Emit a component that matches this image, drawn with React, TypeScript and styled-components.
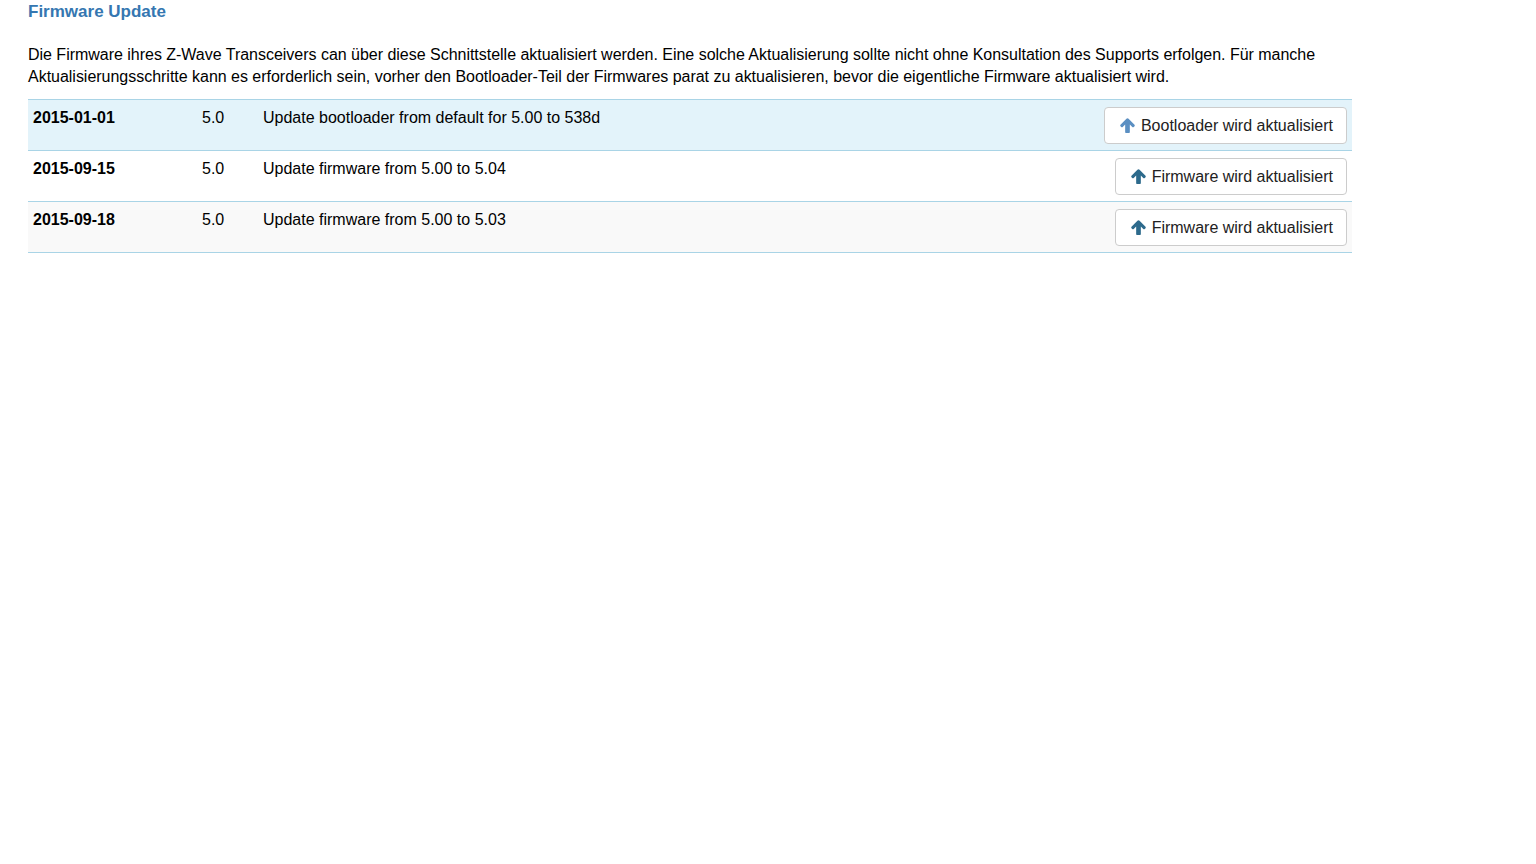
import { createGlobalStyle, styled } from "styled-components";

const GlobalStyle = createGlobalStyle`
  html, body {
    margin: 0;
    padding: 0;
    background: #fff;
  }
  body {
    font-family: "Liberation Sans", Arial, sans-serif;
    color: #000;
  }
`;

const updates = [
  {
    id: 1,
    date: "2015-01-01",
    version: "5.0",
    text: "Update bootloader from default for 5.00 to 538d",
    action: "Bootloader wird aktualisiert",
    kind: "boot" as const,
  },
  {
    id: 2,
    date: "2015-09-15",
    version: "5.0",
    text: "Update firmware from 5.00 to 5.04",
    action: "Firmware wird aktualisiert",
    kind: "firmware" as const,
  },
  {
    id: 3,
    date: "2015-09-18",
    version: "5.0",
    text: "Update firmware from 5.00 to 5.03",
    action: "Firmware wird aktualisiert",
    kind: "firmware" as const,
  },
];

const rowBackgrounds = ["#e3f3fa", "#ffffff", "#f9f9f9"];

function ArrowUp({ color }: { color: string }) {
  return (
    <svg width="17" height="17" viewBox="0 0 16 16" aria-hidden="true">
      <path
        d="M8 1.2 C8.4 1.2 8.7 1.4 9 1.7 L14.6 7.3 C15 7.7 15 8.3 14.6 8.7 L13.9 9.4 C13.5 9.8 12.9 9.8 12.5 9.4 L10.2 7.1 L10.2 14 C10.2 14.6 9.8 15 9.2 15 L6.8 15 C6.2 15 5.8 14.6 5.8 14 L5.8 7.1 L3.5 9.4 C3.1 9.8 2.5 9.8 2.1 9.4 L1.4 8.7 C1 8.3 1 7.7 1.4 7.3 L7 1.7 C7.3 1.4 7.6 1.2 8 1.2 Z"
        fill={color}
      />
    </svg>
  );
}

export default function App() {
  return (
    <>
      <GlobalStyle />
      <Page>
        <Title>Firmware Update</Title>
        <Intro>
          Die Firmware ihres Z-Wave Transceivers can über diese Schnittstelle
          aktualisiert werden. Eine solche Aktualisierung sollte nicht ohne
          Konsultation des Supports erfolgen. Für manche
          Aktualisierungsschritte kann es erforderlich sein, vorher den
          Bootloader-Teil der Firmwares parat zu aktualisieren, bevor die
          eigentliche Firmware aktualisiert wird.
        </Intro>
        <UpdateTable>
          <tbody>
            {updates.map((item, i) => (
              <Row key={item.id} $bg={rowBackgrounds[i]}>
                <DateCell>{item.date}</DateCell>
                <VersionCell>{item.version}</VersionCell>
                <Cell>{item.text}</Cell>
                <ActionCell>
                  <ActionButton type="button">
                    <ArrowUp
                      color={item.kind === "boot" ? "#5b8fc2" : "#2d6a8c"}
                    />
                    {item.action}
                  </ActionButton>
                </ActionCell>
              </Row>
            ))}
          </tbody>
        </UpdateTable>
      </Page>
    </>
  );
}

const Page = styled.div`
  width: 1324px;
  padding: 1px 0 0 28px;
`;

const Title = styled.h2`
  margin: 0;
  font-size: 17px;
  line-height: 22px;
  font-weight: bold;
  color: #3577b1;
`;

const Intro = styled.p`
  margin: 21px 0 11px 0;
  font-size: 16px;
  line-height: 22px;
  letter-spacing: -0.02px;
`;

const UpdateTable = styled.table`
  width: 100%;
  border-collapse: collapse;
  font-size: 16px;
`;

const Row = styled.tr<{ $bg: string }>`
  background: ${({ $bg }) => $bg};
  &:last-child td {
    border-bottom: 1px solid #a9d4e6;
  }
`;

const Cell = styled.td`
  padding: 8px 5px 6px 5px;
  vertical-align: top;
  line-height: 20px;
  border-top: 1px solid #a9d4e6;
`;

const DateCell = styled(Cell)`
  width: 159px;
  font-weight: bold;
`;

const VersionCell = styled(Cell)`
  width: 51px;
`;

const ActionCell = styled(Cell)`
  text-align: right;
  padding-top: 7px;
  padding-bottom: 6px;
`;

const ActionButton = styled.button`
  display: inline-flex;
  align-items: center;
  gap: 5px;
  height: 37px;
  padding: 0 13px 0 14px;
  border: 1px solid #cccccc;
  border-radius: 4px;
  background: #fff;
  font-family: "Liberation Sans", Arial, sans-serif;
  font-size: 16px;
  color: #222;
  cursor: pointer;
`;
